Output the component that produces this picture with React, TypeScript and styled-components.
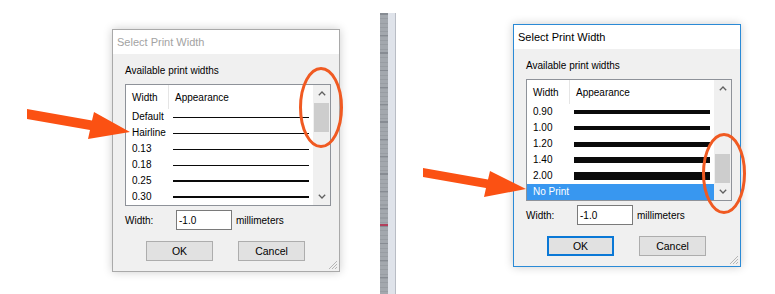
import React from "react";
import styled, { createGlobalStyle, css } from "styled-components";

const GlobalStyle = createGlobalStyle`
  html, body { margin: 0; padding: 0; background: #ffffff; }
  body { font-family: "Liberation Sans", Arial, sans-serif; font-size: 10px; color: #000; }
`;

const Page = styled.div`
  position: relative;
  width: 775px;
  height: 294px;
  overflow: hidden;
  display: flex;
`;

const Pane = styled.section<{ $w?: number; $top: number; $left: number }>`
  ${(p) => (p.$w ? css`width: ${p.$w}px;` : css`flex: 1;`)}
  box-sizing: border-box;
  padding: ${(p) => p.$top}px 0 0 ${(p) => p.$left}px;
`;

const Divider = styled.div`
  margin-top: 13px;
  width: 16px;
  height: 281px;
  display: flex;
`;

const Ruler = styled.div`
  width: 8px;
  background-color: #a3a8ae;
  background-image: linear-gradient(
      to bottom,
      transparent 211px,
      #b2405c 211px,
      #b2405c 213px,
      transparent 213px
    ),
    repeating-linear-gradient(to bottom, transparent 0 16px, #878c93 16px 17.3px),
    repeating-linear-gradient(to bottom, transparent 0 3.3px, #989da3 3.3px 4.33px);
  background-position: 0 0, 0 6px, 0 2px;
`;

const RulerEdge = styled.div`
  width: 8px;
  box-sizing: border-box;
  background: #dfe3ea;
  border-right: 1px solid #b9bdc5;
`;

const Window = styled.div<{ $active?: boolean }>`
  position: relative;
  width: 228px;
  height: 243px;
  box-sizing: border-box;
  border: 1px solid ${(p) => (p.$active ? "#2a8ad6" : "#a9a9a9")};
  background: #f0f0f0;
  box-shadow: 0 0 9px rgba(0, 0, 0, 0.2);
  display: flex;
  flex-direction: column;
`;

const TitleBar = styled.div<{ $active?: boolean }>`
  height: 24px;
  flex: none;
  background: #ffffff;
  display: flex;
  align-items: center;
  padding-left: 4px;
  font-size: 11px;
  color: ${(p) => (p.$active ? "#000" : "#a3a3a3")};
`;

const Body = styled.div`
  flex: 1;
  padding: 11px 8px 0 12px;
  display: flex;
  flex-direction: column;
`;

const GroupLabel = styled.div`
  height: 12px;
  line-height: 12px;
`;

const ListBox = styled.div`
  margin-top: 7px;
  width: 206px;
  height: 122px;
  box-sizing: border-box;
  border: 1px solid #8e9299;
  background: #fff;
  display: flex;
`;

const ListMain = styled.div`
  width: 187px;
  display: flex;
  flex-direction: column;
  overflow: hidden;
`;

const Header = styled.div`
  height: 24px;
  flex: none;
  display: flex;
`;

const HeaderCell = styled.div<{ $w?: number; $sep?: boolean }>`
  ${(p) => (p.$w ? css`width: ${p.$w}px;` : css`flex: 1;`)}
  box-sizing: border-box;
  padding: 1px 0 0 6px;
  display: flex;
  align-items: center;
  ${(p) => p.$sep && css`border-right: 1px solid #e5e5e5;`}
`;

const Row = styled.div<{ $selected?: boolean }>`
  height: 16px;
  flex: none;
  display: flex;
  align-items: center;
  background: ${(p) => (p.$selected ? "#3897f0" : "transparent")};
  color: ${(p) => (p.$selected ? "#fff" : "#000")};
`;

const RowLabel = styled.div`
  width: 47px;
  box-sizing: border-box;
  padding-left: 6px;
  line-height: 16px;
`;

const Stroke = styled.div`
  width: 136px;
  background: #0a0a0a;
`;

const ScrollBar = styled.div<{ $end?: boolean }>`
  width: 17px;
  background: #f0f0f0;
  display: flex;
  flex-direction: column;
`;

const ScrollArrow = styled.div`
  height: 17px;
  flex: none;
  display: flex;
  align-items: center;
  justify-content: center;
`;

const Track = styled.div<{ $end?: boolean }>`
  flex: 1;
  display: flex;
  flex-direction: column;
  justify-content: ${(p) => (p.$end ? "flex-end" : "flex-start")};
  padding: ${(p) => (p.$end ? "0 1px 0 1px" : "1px 1px 0 1px")};
`;

const Thumb = styled.div`
  height: 29px;
  background: #cdcdcd;
`;

const FieldRow = styled.div`
  margin-top: 4px;
  height: 20px;
  display: flex;
  align-items: center;
`;

const FieldLabel = styled.div`
  width: 51px;
`;

const Input = styled.div`
  width: 56px;
  height: 20px;
  box-sizing: border-box;
  border: 1px solid #7a7a7a;
  background: #fff;
  padding-left: 2px;
  display: flex;
  align-items: center;
`;

const Unit = styled.div`
  margin-left: 4px;
`;

const ButtonRow = styled.div`
  margin-top: 11px;
  padding-left: 21px;
  display: flex;
  gap: 25px;
`;

const Button = styled.div<{ $default?: boolean }>`
  width: 67px;
  height: 20px;
  box-sizing: border-box;
  background: #e1e1e1;
  border: 1px solid ${(p) => (p.$default ? "#0a78d6" : "#adadad")};
  ${(p) => p.$default && css`box-shadow: inset 0 0 0 1px #0a78d6;`}
  display: flex;
  align-items: center;
  justify-content: center;
  font-size: 10.5px;
`;

const Grip = styled.svg`
  position: absolute;
  right: 1px;
  bottom: 1px;
`;

const Overlay = styled.svg`
  position: absolute;
  left: 0;
  top: 0;
  pointer-events: none;
`;

type Item = { label: string; w: number; selected?: boolean };

const Chevron = ({ up }: { up?: boolean }) => (
  <svg width="8" height="5" viewBox="0 0 8 5">
    <path
      d={up ? "M0.8 4.2 L4 1 L7.2 4.2" : "M0.8 0.8 L4 4 L7.2 0.8"}
      fill="none"
      stroke="#606060"
      strokeWidth="1.3"
    />
  </svg>
);

const Dialog = ({ active, items, thumbEnd }: { active?: boolean; items: Item[]; thumbEnd?: boolean }) => (
  <Window $active={active}>
    <TitleBar $active={active}>Select Print Width</TitleBar>
    <Body>
      <GroupLabel>Available print widths</GroupLabel>
      <ListBox>
        <ListMain>
          <Header>
            <HeaderCell $w={43} $sep>
              Width
            </HeaderCell>
            <HeaderCell>Appearance</HeaderCell>
          </Header>
          {items.map((it) => (
            <Row key={it.label} $selected={it.selected}>
              <RowLabel>{it.label}</RowLabel>
              {it.w > 0 && <Stroke style={{ height: it.w }} />}
            </Row>
          ))}
        </ListMain>
        <ScrollBar>
          <ScrollArrow>
            <Chevron up />
          </ScrollArrow>
          <Track $end={thumbEnd}>
            <Thumb />
          </Track>
          <ScrollArrow>
            <Chevron />
          </ScrollArrow>
        </ScrollBar>
      </ListBox>
      <FieldRow>
        <FieldLabel>Width:</FieldLabel>
        <Input>-1.0</Input>
        <Unit>millimeters</Unit>
      </FieldRow>
      <ButtonRow>
        <Button $default={active}>OK</Button>
        <Button>Cancel</Button>
      </ButtonRow>
    </Body>
    <Grip width="11" height="11" viewBox="0 0 11 11">
      <path d="M10 2 L2 10 M10 5 L5 10 M10 8 L8 10" stroke="#b5b5b5" strokeWidth="1" />
    </Grip>
  </Window>
);

const leftItems: Item[] = [
  { label: "Default", w: 1 },
  { label: "Hairline", w: 1 },
  { label: "0.13", w: 1 },
  { label: "0.18", w: 1 },
  { label: "0.25", w: 2 },
  { label: "0.30", w: 2 },
];

const rightItems: Item[] = [
  { label: "0.90", w: 4 },
  { label: "1.00", w: 4 },
  { label: "1.20", w: 5 },
  { label: "1.40", w: 6 },
  { label: "2.00", w: 8 },
  { label: "No Print", w: 0, selected: true },
];

const ORANGE = "#fb5113";

export default function App() {
  return (
    <>
      <GlobalStyle />
      <Page>
        <Pane $w={380} $top={29} $left={112}>
          <Dialog items={leftItems} />
        </Pane>
        <Divider>
          <Ruler />
          <RulerEdge />
        </Divider>
        <Pane $top={24} $left={117}>
          <Dialog active items={rightItems} thumbEnd />
        </Pane>
        <Overlay width="775" height="294" viewBox="0 0 775 294">
          <polygon
            points="27,109 92,120.5 94,112 130,132 88,139 90,130 27,119"
            fill={ORANGE}
          />
          <polygon
            points="423,168 488,179.5 490,171 526,189 484,197 486,188 423,177"
            fill={ORANGE}
          />
          <ellipse cx="321" cy="107.5" rx="20.5" ry="39" fill="none" stroke="#f05a22" strokeWidth="3" />
          <ellipse cx="724" cy="173.5" rx="20.5" ry="39" fill="none" stroke="#f05a22" strokeWidth="3" />
        </Overlay>
      </Page>
    </>
  );
}
